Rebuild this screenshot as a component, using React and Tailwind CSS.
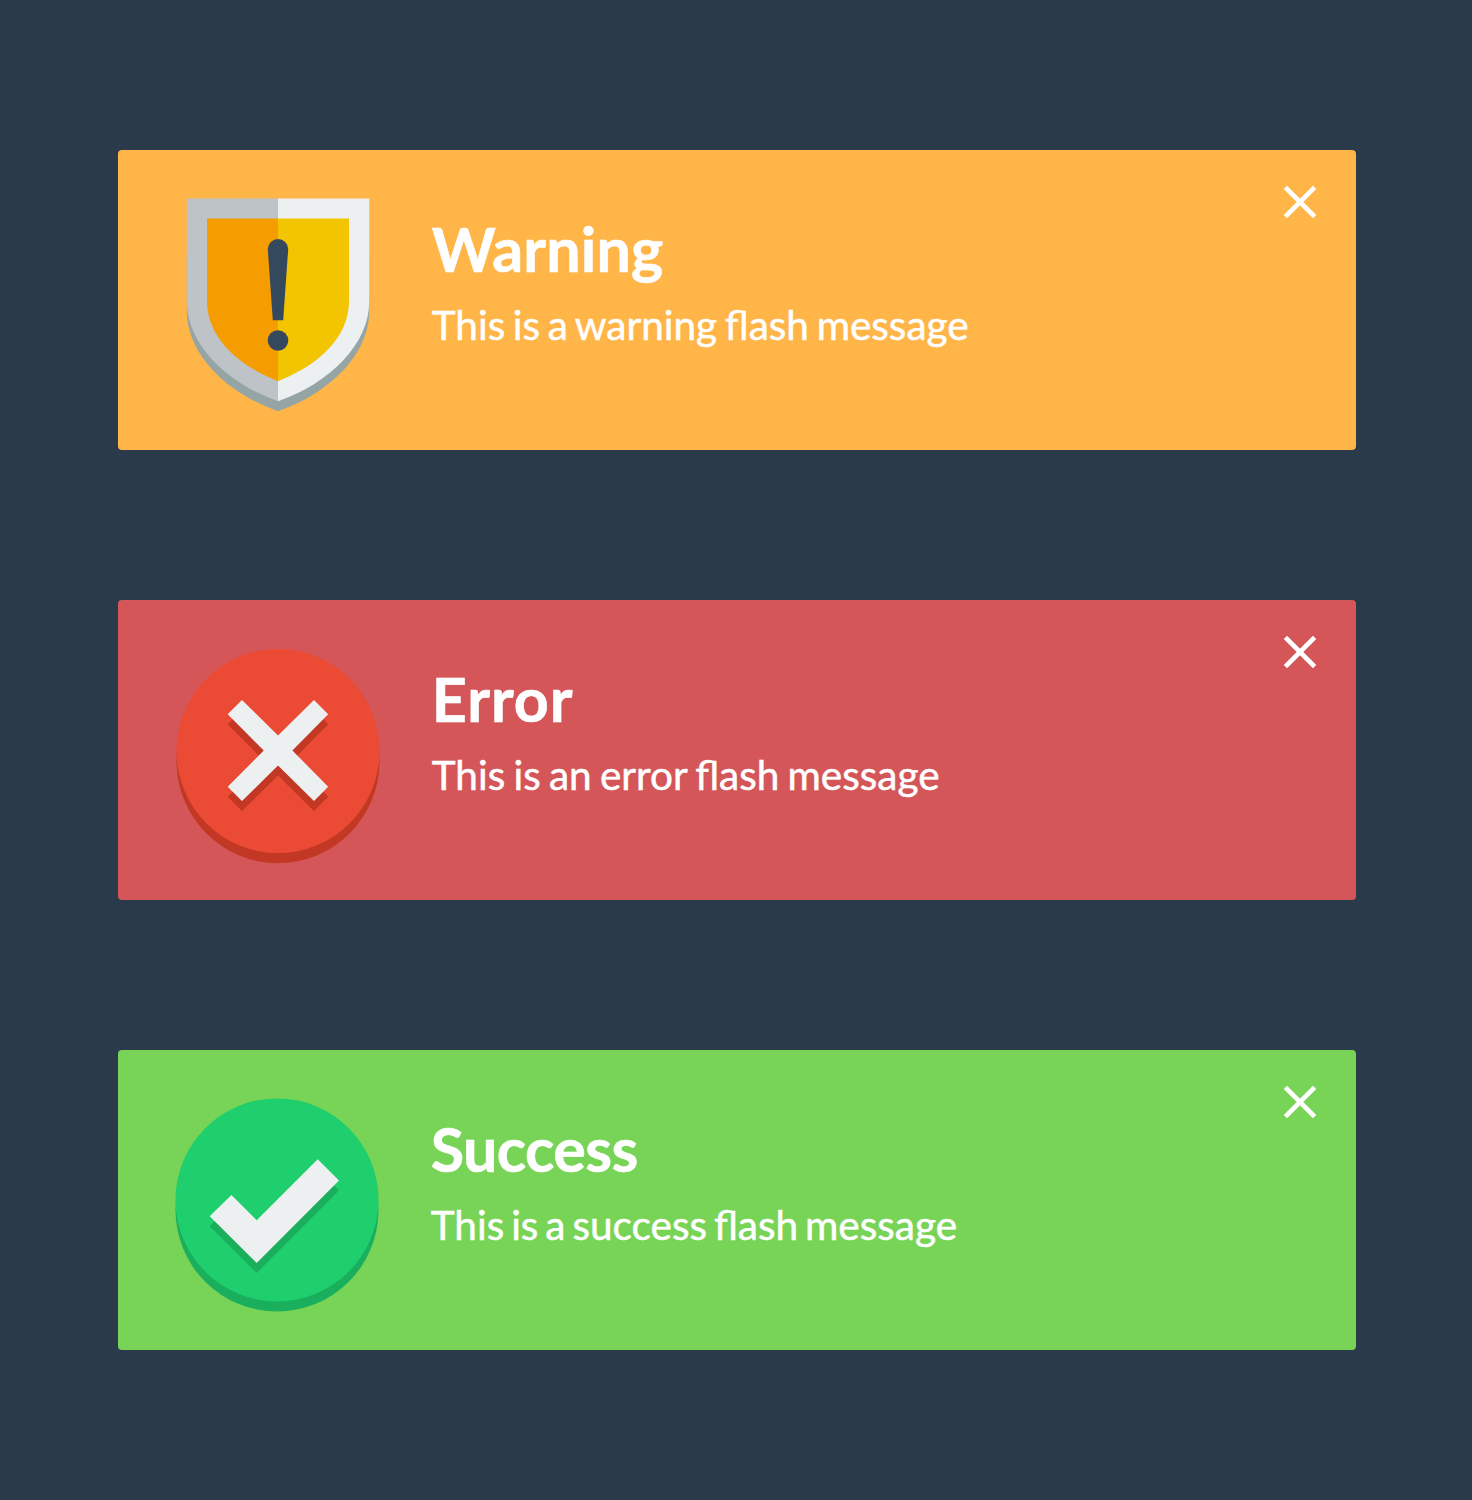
function ShieldIcon() {
  return (
    <svg className="h-[220px] w-[208px] shrink-0" viewBox="0 0 208 220" aria-hidden="true">
      <path fill="#95a5a6" d="M11.8 60H194.3V116C194.3 159 155 198 103 216.2C51 198 11.8 159 11.8 116Z" />
      <path fill="#bdc3c7" d="M11.8 3.4H103V206.2C51 188 11.8 149 11.8 106Z" />
      <path fill="#ecf0f1" d="M103 3.4H194.3V106C194.3 149 155 188 103 206.2Z" />
      <path fill="#f59d00" d="M32 23.5H103V186.2C62 170 32 142 32 106Z" />
      <path fill="#f3c500" d="M103 23.5H174V106C174 142 144 170 103 186.2Z" />
      <path fill="#34495e" d="M92.8 54.2A10.2 10.2 0 0 1 113.2 54.2L108.2 125.2H97.8Z" />
      <circle fill="#34495e" cx="103" cy="145.5" r="10.3" />
    </svg>
  );
}

function CrossIcon() {
  const cross = "67,55 52.7,69.3 88.8,105.5 52.7,141.7 67,156 103,120.6 139,156 153.2,141.7 117.4,105.5 153.2,69.3 139,55 103,90.6";
  return (
    <svg className="h-[220px] w-[208px] shrink-0" viewBox="0 0 208 220" aria-hidden="true">
      <ellipse fill="#c23824" cx="103" cy="116.1" rx="101.5" ry="102.1" />
      <ellipse fill="#eb4b35" cx="103" cy="106" rx="101.5" ry="102.1" />
      <polygon fill="#c23824" points={cross} transform="translate(0 10)" />
      <polygon fill="#ecf0f1" points={cross} />
    </svg>
  );
}

function CheckIcon() {
  const check = "56.4,100 81.7,125.3 142.7,64.3 164,85.5 81.7,168 34.7,121.3";
  return (
    <svg className="h-[220px] w-[208px] shrink-0" viewBox="0 0 208 220" aria-hidden="true">
      <circle fill="#1aaf5d" cx="102" cy="115" r="101.5" />
      <circle fill="#1fce6d" cx="102" cy="104.9" r="101.5" />
      <polygon fill="#1aaf5d" points={check} transform="translate(0 10)" />
      <polygon fill="#ecf0f1" points={check} />
    </svg>
  );
}

function FlashMessage({ icon, title, text, color, copyMargin, titleSpacing, textSpacing }) {
  return (
    <section className={`flex h-[300px] items-start rounded pt-[45px] pr-10 pl-[57px] text-white ${color}`}>
      {icon}
      <div className={`flex-1 pt-[18px] ${copyMargin}`}>
        <h2 className={`text-[61px] leading-[72px] font-bold [-webkit-text-stroke:0.6px_white] ${titleSpacing}`}>{title}</h2>
        <p className={`mt-[16px] text-[40.5px] leading-[48px] [-webkit-text-stroke:0.5px_white] ${textSpacing}`}>{text}</p>
      </div>
      <button type="button" aria-label="Close" className="-mt-[9px] size-8">
        <svg className="size-8 overflow-visible" viewBox="0 0 32 32" fill="none" stroke="currentColor" strokeWidth="4.8">
          <path d="M1.4 1.4L30.6 30.6M30.6 1.4L1.4 30.6" />
        </svg>
      </button>
    </section>
  );
}

export default function App() {
  return (
    <main className="flex h-[1500px] flex-col gap-[150px] bg-[#2b3a4a] pt-[150px] pr-[116px] pl-[118px] font-['Lato',sans-serif]">
      <FlashMessage icon={<ShieldIcon />} title="Warning" text="This is a warning flash message" color="bg-[#ffb548]" copyMargin="ml-[48.75px]" titleSpacing="tracking-[0.15px]" textSpacing="[word-spacing:-2.7px]" />
      <FlashMessage icon={<CrossIcon />} title="Error" text="This is an error flash message" color="bg-[#d45659]" copyMargin="ml-[48.75px]" titleSpacing="tracking-[1px]" textSpacing="[word-spacing:-2.1px]" />
      <FlashMessage icon={<CheckIcon />} title="Success" text="This is a success flash message" color="bg-[#78d457]" copyMargin="ml-[47.75px]" titleSpacing="tracking-[-0.6px]" textSpacing="[word-spacing:-3.4px]" />
    </main>
  );
}
